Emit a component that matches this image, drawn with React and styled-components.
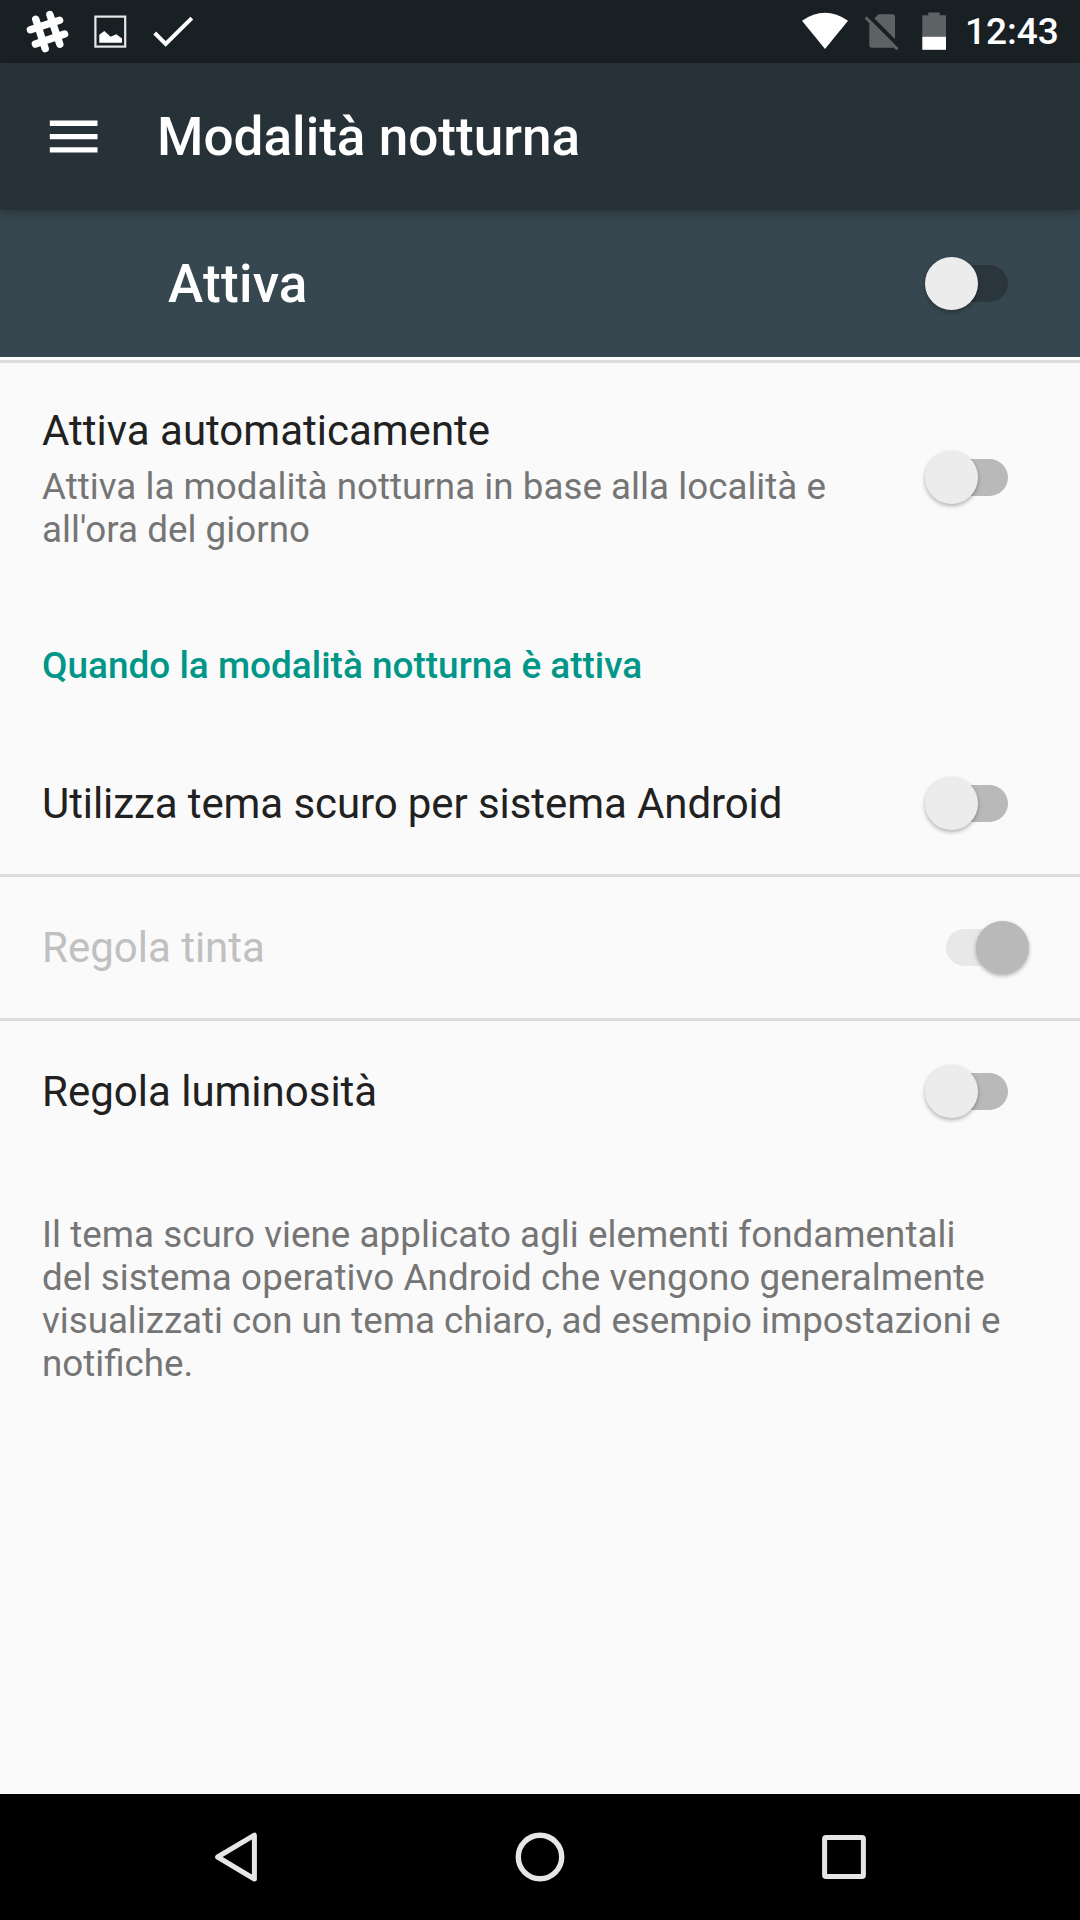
import React from 'react'
import styled, { createGlobalStyle } from 'styled-components';

const GlobalStyle = createGlobalStyle`
  * {
    box-sizing: border-box;
  }

  body {
    margin: 0;
    background: #fafafa;
    font-family: Roboto, sans-serif;
  }
`;

const Screen = styled.div`
  display: flex;
  flex-direction: column;
  width: 1080px;
  height: 1920px;
  background: #fafafa;
  overflow: hidden;
`;

const StatusBar = styled.div`
  display: flex;
  justify-content: space-between;
  flex: none;
  height: 63px;
  padding-right: 22px;
  background: #182024;
`;

const StatusGroup = styled.div`
  display: flex;
`;

const Clock = styled.span`
  width: 93px;
  font-size: 37px;
  font-weight: 500;
  line-height: 63px;
  color: #fff;
  white-space: nowrap;
`;

const AppBar = styled.header`
  position: relative;
  z-index: 1;
  display: flex;
  align-items: center;
  flex: none;
  gap: 52px;
  height: 147px;
  padding-left: 42px;
  background: #273238;
  box-shadow: 0 4px 9px rgba(0, 0, 0, 0.22);
`;

const BarTitle = styled.h1`
  margin: 0;
  padding-top: 1px;
  font-size: 53.1px;
  font-weight: 500;
  line-height: 62px;
  letter-spacing: ${(props) => props.$spacing || 0}px;
  color: #fff;
`;

const MasterBar = styled.div`
  display: flex;
  align-items: center;
  justify-content: space-between;
  flex: none;
  height: 147px;
  padding: 0 51px 0 168px;
  background: #37474f;
`;

const List = styled.main`
  flex: 1;
  border-top: 3px solid #fff;
`;

const Row = styled.div`
  display: flex;
  align-items: center;
  justify-content: space-between;
  height: ${(props) => props.$height}px;
  padding: 0 51px 0 42px;
  ${(props) => props.$divider && 'border-top: 3px solid #dcdcdc;'}
`;

const RowText = styled.div`
  width: 830px;
  padding-top: 2px;
`;

const RowTitle = styled.div`
  font-size: 42px;
  line-height: 49px;
  letter-spacing: ${(props) => props.$spacing || 0}px;
  color: ${(props) => (props.$disabled ? '#c0c0c0' : '#212121')};
`;

const Summary = styled.div`
  margin-top: 10px;
  font-size: 36.75px;
  line-height: 43px;
  letter-spacing: 0.025px;
  color: #757575;
`;

const Category = styled.h2`
  height: 141px;
  margin: 0;
  padding-left: 42px;
  font-size: 36.95px;
  font-weight: 500;
  line-height: 147px;
  color: #009688;
`;

const Footer = styled.p`
  margin: 0;
  padding: 51px 42px 0;
  font-size: 36.75px;
  line-height: 43px;
  color: #757575;
`;

const FooterLine = styled.span`
  display: block;
  letter-spacing: ${(props) => props.$spacing}px;
  white-space: nowrap;
`;

const SwitchBox = styled.div`
  display: grid;
  flex: none;
  align-items: center;
  width: 104px;
  height: 53px;
`;

const Track = styled.div`
  grid-area: 1/1;
  justify-self: center;
  width: 62px;
  height: 37px;
  border-radius: 19px;
  background: ${(props) => props.$color};
`;

const Thumb = styled.div`
  grid-area: 1/1;
  justify-self: ${(props) => (props.$on ? 'end' : 'start')};
  width: 53px;
  height: 53px;
  border-radius: 50%;
  background: ${(props) => props.$color};
  box-shadow: 0 2px 4px rgba(0, 0, 0, 0.3);
`;

const NavBar = styled.nav`
  display: flex;
  align-items: center;
  justify-content: center;
  flex: none;
  height: 126px;
  background: #000;
`;

const NavButton = styled.div`
  display: flex;
  justify-content: center;
  width: 304px;
`;

const footerLines = [
    { text: 'Il tema scuro viene applicato agli elementi fondamentali', spacing: 0.045 },
    { text: 'del sistema operativo Android che vengono generalmente', spacing: 0.095 },
    { text: 'visualizzati con un tema chiaro, ad esempio impostazioni e', spacing: -0.02 },
    { text: 'notifiche.', spacing: 0 },
];

function Switch({ on, track = '#b9b9b9', thumb = '#ececec' }) {
    return (
        <SwitchBox>
            <Track $color={track} />
            <Thumb $on={on} $color={thumb} />
        </SwitchBox>
    )
}

function NotificationIcons() {
    return (
        <svg width="210" height="63" viewBox="0 0 210 63" fill="none">
            <path
                d="M35.7 19.2L45.2 48.6M49.9 14.6L59.8 44.2M30.4 29.8L59.6 20.2M35.4 44.1L64.6 34"
                stroke="#fff"
                strokeWidth="7.4"
                strokeLinecap="round"
            />
            <rect x="95.4" y="16.6" width="29.8" height="30" stroke="#e6e9e9" strokeWidth="2.2" />
            <path d="M99.3 42.7V34.7L104.3 31L110.6 36.8L116.3 34.2L122 38.6V42.7Z" fill="#fff" />
            <path d="M154.7 33L165.7 44L191.8 18.2" stroke="#fff" strokeWidth="4" />
        </svg>
    )
}

function SystemIcons() {
    return (
        <svg width="165" height="63" viewBox="800 0 165 63" fill="none">
            <path d="M825 49L802 20.7Q825 4.9 848 20.7Z" fill="#fff" />
            <path
                d="M878.5 14.3H892.5Q895 14.3 895 16.8V45.2Q895 47.7 892.5 47.7H871.8Q869.3 47.7 869.3 45.2V23.5Z"
                fill="#5d6264"
            />
            <path d="M866 13L899 46" stroke="#182024" strokeWidth="4" />
            <path d="M865.6 17.4L897.4 49.2" stroke="#5d6264" strokeWidth="3" />
            <path d="M922.3 15.3H928.3V12.5H939.7V15.3H946V37H922.3Z" fill="#5d6264" />
            <path d="M922.3 36.8H946V49.8H922.3Z" fill="#fff" />
        </svg>
    )
}

function App() {
    return (
        <>
            <GlobalStyle />
            <Screen>
                <StatusBar>
                    <NotificationIcons />
                    <StatusGroup>
                        <SystemIcons />
                        <Clock>12:43</Clock>
                    </StatusGroup>
                </StatusBar>

                <AppBar>
                    <svg width="63" height="63" viewBox="0 0 63 63">
                        <path d="M7.8 15.6h47.7v5.3H7.8zM7.8 29h47.7v5.3H7.8zM7.8 42.2h47.7v5.3H7.8z" fill="#fff" />
                    </svg>
                    <BarTitle>Modalità notturna</BarTitle>
                </AppBar>

                <MasterBar>
                    <BarTitle as="div" $spacing={0.25}>Attiva</BarTitle>
                    <Switch track="#2a363c" />
                </MasterBar>

                <List>
                    <Row $height={232} $divider>
                        <RowText>
                            <RowTitle>Attiva automaticamente</RowTitle>
                            <Summary>Attiva la modalità notturna in base alla località e all'ora del giorno</Summary>
                        </RowText>
                        <Switch />
                    </Row>
                    <Category>Quando la modalità notturna è attiva</Category>
                    <Row $height={141}>
                        <RowTitle $spacing={-0.09}>Utilizza tema scuro per sistema Android</RowTitle>
                        <Switch />
                    </Row>
                    <Row $height={144} $divider>
                        <RowTitle $disabled>Regola tinta</RowTitle>
                        <Switch on track="#e8e8e8" thumb="#b9b9b9" />
                    </Row>
                    <Row $height={144} $divider>
                        <RowTitle>Regola luminosità</RowTitle>
                        <Switch />
                    </Row>
                    <Footer>
                        {footerLines.map((line) => (
                            <FooterLine key={line.text} $spacing={line.spacing}>{line.text}</FooterLine>
                        ))}
                    </Footer>
                </List>

                <NavBar>
                    <NavButton>
                        <svg width="50" height="50" viewBox="0 0 50 50" fill="none">
                            <path d="M43.4 3.2V47L6.6 25Z" stroke="#e6e6e6" strokeWidth="5" strokeLinejoin="round" />
                        </svg>
                    </NavButton>
                    <NavButton>
                        <svg width="50" height="50" viewBox="0 0 50 50" fill="none">
                            <circle cx="25" cy="25" r="21.7" stroke="#e6e6e6" strokeWidth="5.4" />
                        </svg>
                    </NavButton>
                    <NavButton>
                        <svg width="50" height="50" viewBox="0 0 50 50" fill="none">
                            <rect x="5.6" y="5.6" width="38.8" height="38.8" rx="1.5" stroke="#e6e6e6" strokeWidth="5" />
                        </svg>
                    </NavButton>
                </NavBar>
            </Screen>
        </>
    )
}

export default App
